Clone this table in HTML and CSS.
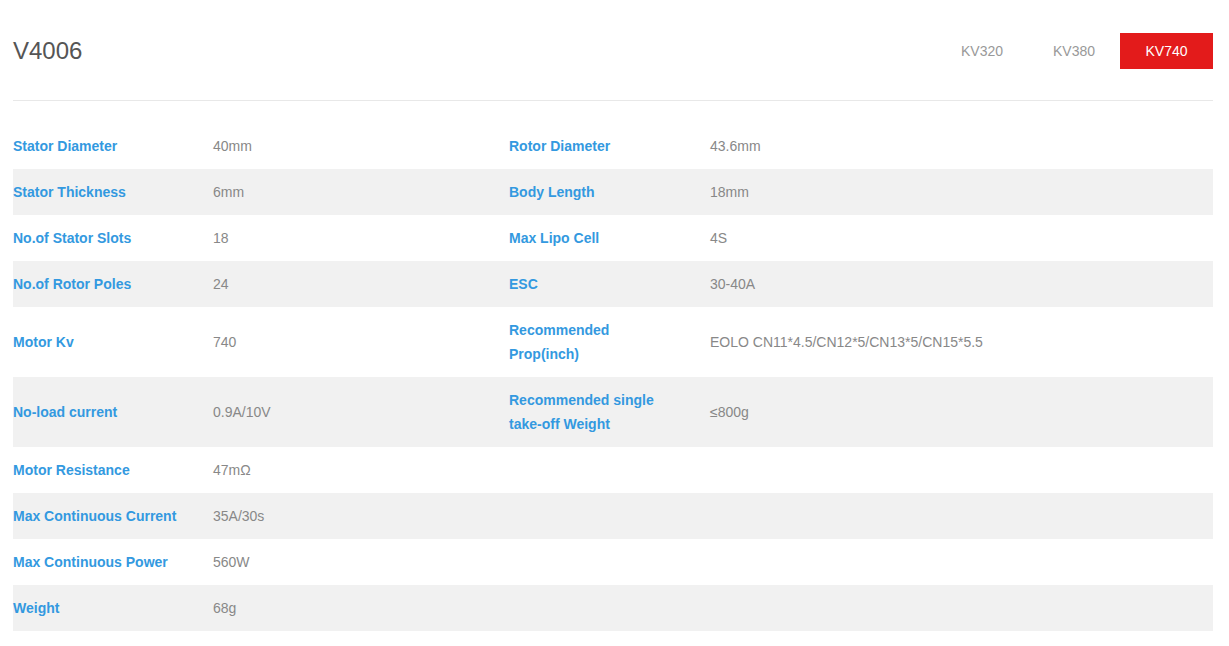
FILE: index.html
```html
<!DOCTYPE html>
<html lang="en">
<head>
<meta charset="utf-8">
<title>V4006</title>
<link rel="stylesheet" href="styles.css">
</head>
<body>
<div class="page">
  <header class="head">
    <h1 class="title">V4006</h1>
    <nav class="tabs">
      <span class="tab">KV320</span>
      <span class="tab">KV380</span>
      <span class="tab active">KV740</span>
    </nav>
  </header>
  <div class="specs">
    <div class="row"><div class="lbl">Stator Diameter</div><div class="val">40mm</div><div class="lbl">Rotor Diameter</div><div class="val">43.6mm</div></div>
    <div class="row alt"><div class="lbl">Stator Thickness</div><div class="val">6mm</div><div class="lbl">Body Length</div><div class="val">18mm</div></div>
    <div class="row"><div class="lbl">No.of Stator Slots</div><div class="val">18</div><div class="lbl">Max Lipo Cell</div><div class="val">4S</div></div>
    <div class="row alt"><div class="lbl">No.of Rotor Poles</div><div class="val">24</div><div class="lbl">ESC</div><div class="val">30-40A</div></div>
    <div class="row"><div class="lbl">Motor Kv</div><div class="val">740</div><div class="lbl">Recommended<br>Prop(inch)</div><div class="val">EOLO CN11*4.5/CN12*5/CN13*5/CN15*5.5</div></div>
    <div class="row alt"><div class="lbl">No-load current</div><div class="val">0.9A/10V</div><div class="lbl">Recommended single<br>take-off Weight</div><div class="val">≤800g</div></div>
    <div class="row"><div class="lbl">Motor Resistance</div><div class="val">47mΩ</div><div class="lbl"></div><div class="val"></div></div>
    <div class="row alt"><div class="lbl">Max Continuous Current</div><div class="val">35A/30s</div><div class="lbl"></div><div class="val"></div></div>
    <div class="row"><div class="lbl">Max Continuous Power</div><div class="val">560W</div><div class="lbl"></div><div class="val"></div></div>
    <div class="row alt"><div class="lbl">Weight</div><div class="val">68g</div><div class="lbl"></div><div class="val"></div></div>
  </div>
</div>
</body>
</html>
```
FILE: styles.css
```css
* { box-sizing: border-box; }
html, body { margin: 0; padding: 0; background: #fff; }
body { font-family: "Liberation Sans", Arial, sans-serif; padding-top: 1px; }
.page { width: 1200px; margin-left: 13px; }
.head {
  display: flex;
  align-items: center;
  justify-content: space-between;
  height: 100px;
  padding-top: 1px;
  border-bottom: 1px solid #e8e8e8;
}
.title {
  margin: 0;
  font-weight: normal;
  font-size: 24px;
  color: #555;
}
.tabs { display: flex; }
.tab {
  width: 92px;
  height: 36px;
  display: flex;
  align-items: center;
  justify-content: center;
  font-size: 14px;
  color: #999;
}
.tab.active { width: 93px; background: #e31b1b; color: #fff; }
.specs { margin-top: 22px; }
.row {
  display: grid;
  grid-template-columns: 200px 296px 201px 1fr;
  align-items: center;
}
.row.alt { background: #f1f1f1; }
.lbl, .val {
  padding: 11px 0;
  font-size: 14px;
  line-height: 24px;
}
.lbl { font-weight: bold; color: #3399e0; }
.val { color: #888; }
```
